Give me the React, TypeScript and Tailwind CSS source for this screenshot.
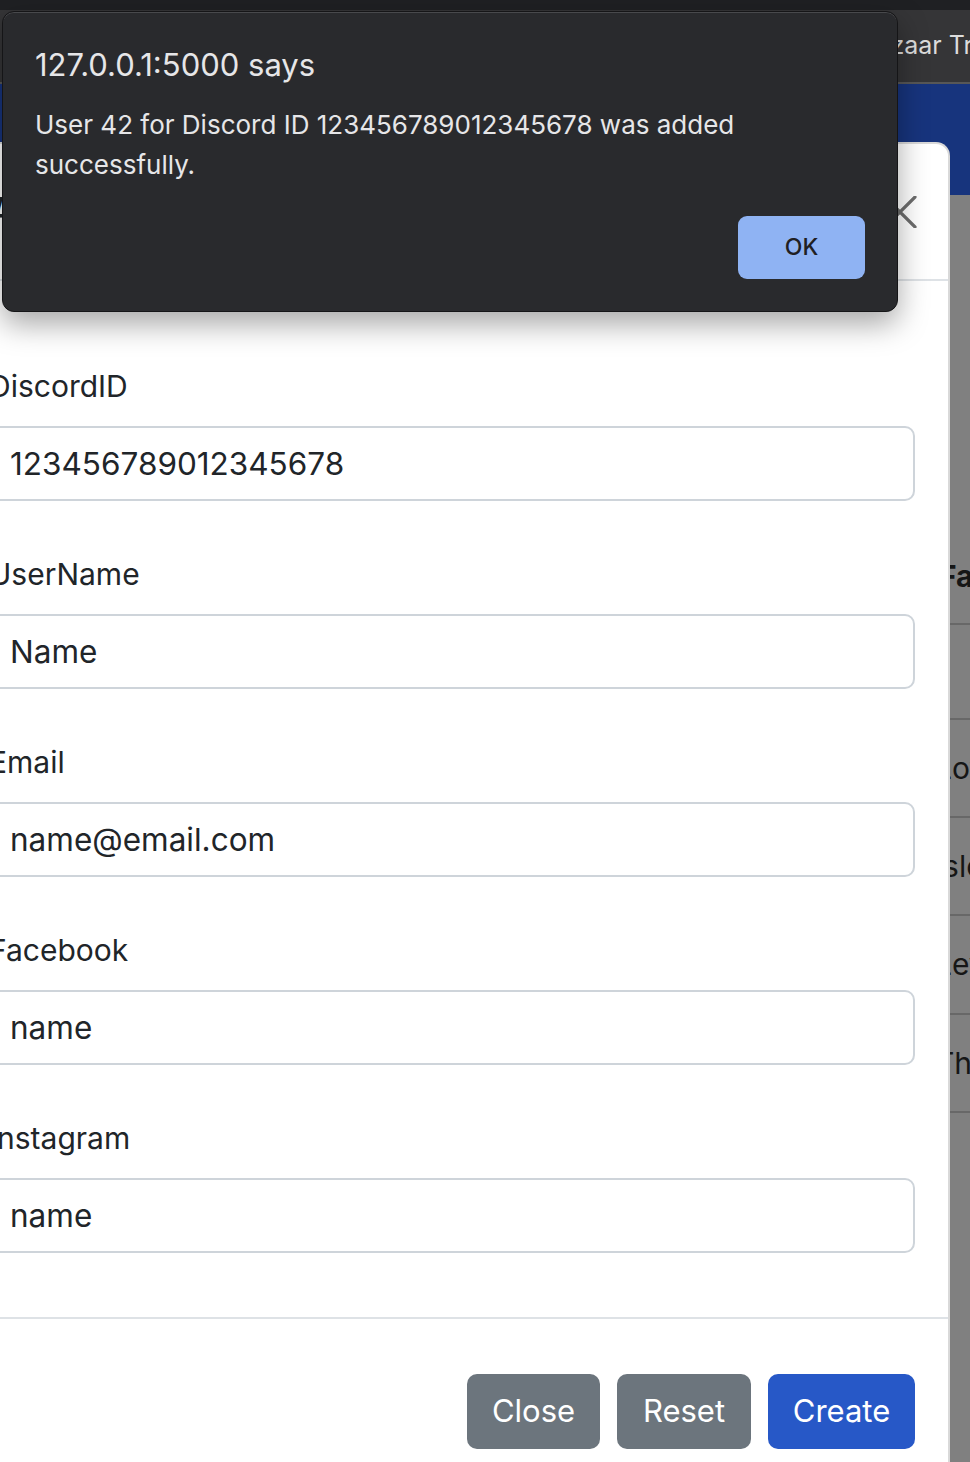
import React from "react";

const font = { fontFamily: "Inter, 'Noto Sans', 'Liberation Sans', sans-serif" };

function Field({ label, value, first }: { label: string; value: string; first?: boolean }) {
  return (
    <div className={first ? "" : "mt-[51px]"}>
      <div className="h-[45px] text-[30px] leading-[45px] text-[#212529] mb-[17px]">{label}</div>
      <div className="h-[75px] rounded-[10px] border-2 border-[#ced4da] bg-white flex items-center pl-[19px] text-[31.5px] text-[#212529]">
        {value}
      </div>
    </div>
  );
}

export default function App() {
  return (
    <div className="relative w-[970px] h-[1462px] overflow-hidden bg-[#808080]" style={font}>
      {/* Background page (under backdrop) */}
      <div className="h-[10px] bg-[#1f2023]" />
      <div className="h-[72px] bg-[#353537] flex items-center pl-[860px] text-[25px] text-[#dcdcdc] whitespace-nowrap">
        Bazaar Trading
      </div>
      <div className="h-[2px] bg-[#575757]" />
      <div className="h-[111px] bg-[#17347d]" />
      <div className="pt-[335px] pl-[935px] whitespace-nowrap text-[30px] text-[#161616]">
        <div className="h-[95px] flex items-center pl-[4px] font-bold border-b-2 border-[#686868]">Favorite</div>
        <div className="h-[95px] border-b-2 border-[#686868]" />
        <div className="h-[98px] flex items-center border-b-2 border-[#686868]">Lovebird</div>
        <div className="h-[98px] flex items-center border-b-2 border-[#686868]">Islonia</div>
        <div className="h-[99px] flex items-center border-b-2 border-[#686868]">Leviathan</div>
        <div className="h-[98px] flex items-center border-b-2 border-[#686868]">Thistle</div>
      </div>

      {/* Modal */}
      <div className="absolute left-[-43px] top-[142px] w-[993px] h-[1400px] bg-white rounded-tr-[14px] rounded-tl-[14px] border-2 border-black/15 flex flex-col">
        <div className="h-[137px] shrink-0 border-b-2 border-[#dee2e6] flex items-center justify-between pl-[30px] pr-[31px]">
          <div className="text-[38px] font-medium text-[#212529]">Add User</div>
          <svg width="34" height="32" viewBox="0 0 34 32">
            <path d="M2 1 L32 31 M32 1 L2 31" stroke="#6d6d6d" strokeWidth="3.2" strokeLinecap="round" />
          </svg>
        </div>
        <div className="pl-[30px] pr-[33px] pt-[83px] pb-[64px]">
          <Field first label="DiscordID" value="123456789012345678" />
          <Field label="UserName" value="Name" />
          <Field label="Email" value="name@email.com" />
          <Field label="Facebook" value="name" />
          <Field label="Instagram" value="name" />
        </div>
        <div className="border-t-2 border-[#dee2e6] pt-[55px] pr-[33px] flex justify-end gap-[17px]">
          <button className="h-[75px] w-[133px] rounded-[10px] bg-[#6c757d] text-white text-[31px]">Close</button>
          <button className="h-[75px] w-[134px] rounded-[10px] bg-[#6c757d] text-white text-[31px]">Reset</button>
          <button className="h-[75px] w-[147px] rounded-[10px] bg-[#2758c7] text-white text-[31px]">Create</button>
        </div>
      </div>

      {/* Alert dialog */}
      <div className="absolute left-[2px] top-[11px] w-[896px] h-[301px] rounded-[12px] bg-[#292a2d] border border-[#151517] shadow-[inset_0_1px_0_#48494c,0_12px_30px_rgba(0,0,0,0.35)] pl-[32px] pr-[32px] pt-[33px]">
        <div className="text-[31px] leading-[40px] text-[#e6e6e8]">127.0.0.1:5000 says</div>
        <div className="mt-[20px] text-[26px] leading-[40px] text-[#e6e6e8] whitespace-nowrap">
          User 42 for Discord ID 123456789012345678 was added
          <br />
          successfully.
        </div>
        <div className="mt-[31px] flex justify-end">
          <button className="w-[127px] h-[63px] rounded-[9px] bg-[#8fb3f3] text-[#1f2023] text-[23px] font-medium">OK</button>
        </div>
      </div>
    </div>
  );
}
